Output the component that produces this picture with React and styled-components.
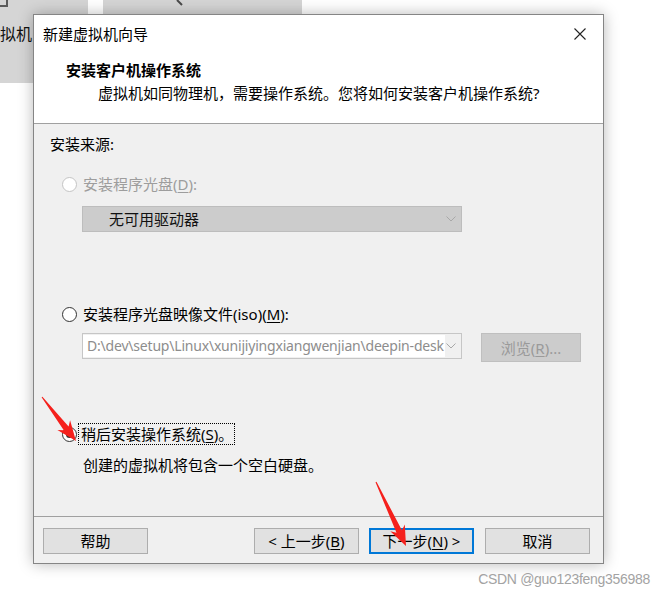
import React from "react";
import styled, { createGlobalStyle } from "styled-components";

const GlobalStyle = createGlobalStyle`
    html, body {
        margin: 0;
        padding: 0;
        background: #ffffff;
    }
    body {
        font-family: "Noto Sans", "Noto Sans CJK SC", sans-serif;
        color: #000000;
    }
`;

const Desktop = styled.div`
    position: relative;
    width: 664px;
    height: 593px;
    overflow: hidden;
    background: #ffffff;
`;

const TileRow = styled.div`
    display: flex;
    gap: 15px;
    align-items: flex-start;
`;

const Tile = styled.div`
    position: relative;
    width: ${({ w }) => w}px;
    height: ${({ h }) => h}px;
    background: #d5d5d5;
    overflow: hidden;
`;

const TileLabel = styled.div`
    margin: 24px 0 0 0;
    font-size: 16px;
    line-height: 20px;
    color: #111;
`;

const Dialog = styled.div`
    position: absolute;
    left: 33px;
    top: 14px;
    width: 569px;
    height: 548px;
    border: 1px solid #858585;
    background: #f0f0f0;
    box-shadow: 0 0 14px rgba(0, 0, 0, 0.28);
    display: flex;
    flex-direction: column;
    font-size: 15px;
`;

const TitleBar = styled.div`
    height: 37px;
    background: #ffffff;
    display: flex;
    align-items: center;
    justify-content: space-between;
    padding: 0 17px 0 9px;
    line-height: 20px;
`;

const Header = styled.div`
    height: 72px;
    background: #ffffff;
    padding: 8px 0 0 32px;
    box-sizing: border-box;
    border-bottom: 1px solid #a0a0a0;
    h1 {
        margin: 0;
        font-size: 15px;
        font-weight: bold;
        line-height: 20px;
    }
    p {
        margin: 3px 0 0 32px;
        line-height: 20px;
    }
`;

const Body = styled.div`
    flex: 1;
    padding: 0 16px;
    display: flex;
    flex-direction: column;
    align-items: flex-start;
    border-bottom: 1px solid #a0a0a0;
    line-height: 20px;
`;

const SourceLabel = styled.div`
    margin-top: 10px;
`;

const RadioRow = styled.label`
    display: flex;
    align-items: center;
    gap: 6px;
    margin-top: ${({ top }) => top}px;
    margin-left: 12px;
    color: ${({ disabled }) => (disabled ? "#9d9d9d" : "#000")};
`;

const RadioCircle = styled.span`
    width: 13px;
    height: 13px;
    border-radius: 50%;
    border: 1px solid ${({ disabled }) => (disabled ? "#c4c4c4" : "#333")};
    background: #ffffff;
    display: flex;
    align-items: center;
    justify-content: center;
    &::after {
        content: "";
        width: 7px;
        height: 7px;
        border-radius: 50%;
        background: ${({ checked }) => (checked ? "#333" : "transparent")};
    }
`;

const Focus = styled.span`
    outline: 1px dotted #000;
    outline-offset: 0;
    padding: 0 1px 0 2px;
    margin-left: -4px;
`;

const Key = styled.u`
    text-underline-offset: 2px;
`;

const Select = styled.div`
    margin-top: ${({ top }) => top}px;
    margin-left: 32px;
    width: 380px;
    height: 26px;
    box-sizing: border-box;
    border: 1px solid ${({ border }) => border};
    background: ${({ bg }) => bg};
    display: flex;
    align-items: center;
    justify-content: space-between;
    padding-right: 5px;
`;

const SelectText = styled.span`
    padding-left: ${({ indent }) => indent}px;
    color: ${({ muted }) => (muted ? "#8d8d8d" : "#111")};
    background: ${({ field }) => (field ? "#ffffff" : "transparent")};
    font-size: ${({ small }) => (small ? "14px" : "15px")};
    white-space: nowrap;
    overflow: hidden;
    width: ${({ w }) => (w ? `${w}px` : "auto")};
    line-height: 22px;
    letter-spacing: ${({ small }) => (small ? "-0.2px" : "0")};
`;

const PathRow = styled.div`
    display: flex;
    align-items: flex-start;
    gap: 19px;
`;

const BrowseButton = styled.div`
    margin-top: 9px;
    width: 98px;
    height: 27px;
    border: 1px solid #bfbfbf;
    background: #cccccc;
    color: #9a9a9a;
    display: flex;
    align-items: center;
    justify-content: center;
`;

const Hint = styled.div`
    margin-top: 11px;
    margin-left: 33px;
`;

const Footer = styled.div`
    height: 46px;
    display: flex;
    padding: 11px 13px 0 9px;
    box-sizing: border-box;
    gap: 10px;
`;

const Button = styled.div`
    width: ${({ primary }) => (primary ? "101px" : "103px")};
    height: ${({ primary }) => (primary ? "22px" : "24px")};
    border: ${({ primary }) =>
        primary ? "2px solid #0078d7" : "1px solid #adadad"};
    background: #e1e1e1;
    display: flex;
    align-items: center;
    justify-content: center;
    line-height: 20px;
    margin-left: ${({ push, spaced }) => (push ? "auto" : spaced ? "1px" : "0")};
`;

const Watermark = styled.div`
    position: absolute;
    right: 14px;
    bottom: 6px;
    font-family: "Liberation Sans", Arial, sans-serif;
    font-size: 14px;
    color: #a3a3a3;
    letter-spacing: -0.3px;
`;

const Overlay = styled.svg`
    position: absolute;
    left: 0;
    top: 0;
    pointer-events: none;
`;

const arrowPoints = (tx, ty, px, py) => {
    const dx = px - tx;
    const dy = py - ty;
    const len = Math.hypot(dx, dy);
    const ux = dx / len;
    const uy = dy / len;
    const nx = -uy;
    const ny = ux;
    const at = (s, w) => [tx + ux * s + nx * w, ty + uy * s + ny * w];
    const pts = [
        at(0, 0.5),
        at(len - 16, 3),
        at(len - 20, 8),
        at(len, 0),
        at(len - 20, -8),
        at(len - 16, -3),
        at(0, -0.5),
    ];
    return pts.map((p) => p.map((v) => v.toFixed(1)).join(",")).join(" ");
};

const Chevron = () => (
    <svg width="10" height="6" viewBox="0 0 10 6">
        <path d="M0.5 0.5 L5 5 L9.5 0.5" fill="none" stroke="#a8a8a8" strokeWidth="1" />
    </svg>
);

const App = () => {
    return (
        <Desktop>
            <GlobalStyle />
            <TileRow>
                <Tile w={88} h={83}>
                    <svg width="10" height="8" style={{ position: "absolute", left: 0, top: 0 }}>
                        <path d="M0 6 H7 V0" fill="none" stroke="#5a5a5a" strokeWidth="2" />
                    </svg>
                    <TileLabel>拟机</TileLabel>
                </Tile>
                <Tile w={199} h={60}>
                    <svg width="20" height="8" style={{ position: "absolute", left: 72, top: 0 }}>
                        <path d="M2 0 L7 5" fill="none" stroke="#4a4a4a" strokeWidth="2" />
                    </svg>
                </Tile>
            </TileRow>

            <Dialog>
                <TitleBar>
                    <span>新建虚拟机向导</span>
                    <svg width="12" height="12" viewBox="0 0 12 12">
                        <path d="M0.5 0.5 L11.5 11.5 M11.5 0.5 L0.5 11.5" stroke="#222" strokeWidth="1.1" />
                    </svg>
                </TitleBar>
                <Header>
                    <h1>安装客户机操作系统</h1>
                    <p>虚拟机如同物理机，需要操作系统。您将如何安装客户机操作系统?</p>
                </Header>
                <Body>
                    <SourceLabel>安装来源:</SourceLabel>

                    <RadioRow top={20} disabled>
                        <RadioCircle disabled />
                        <span>
                            安装程序光盘(<Key>D</Key>):
                        </span>
                    </RadioRow>
                    <Select top={12} border="#bdbdbd" bg="#cccccc">
                        <SelectText indent={26}>无可用驱动器</SelectText>
                        <Chevron />
                    </Select>

                    <RadioRow top={72}>
                        <RadioCircle />
                        <span>
                            安装程序光盘映像文件(iso)(<Key>M</Key>):
                        </span>
                    </RadioRow>
                    <PathRow>
                        <Select top={9} border="#c6c6c6" bg="#f0f0f0">
                            <SelectText indent={4} muted field small w={358}>
                                D:\dev\setup\Linux\xunijiyingxiangwenjian\deepin-desk
                            </SelectText>
                            <Chevron />
                        </Select>
                        <BrowseButton>
                            浏览(<Key>R</Key>)...
                        </BrowseButton>
                    </PathRow>

                    <RadioRow top={62}>
                        <RadioCircle checked />
                        <Focus>
                            稍后安装操作系统(<Key>S</Key>)。
                        </Focus>
                    </RadioRow>
                    <Hint>创建的虚拟机将包含一个空白硬盘。</Hint>
                </Body>
                <Footer>
                    <Button>帮助</Button>
                    <Button push>
                        &lt; 上一步(<Key>B</Key>)
                    </Button>
                    <Button primary>
                        下一步(<Key>N</Key>) &gt;
                    </Button>
                    <Button spaced>取消</Button>
                </Footer>
            </Dialog>

            <Overlay width="664" height="593">
                <polygon points={arrowPoints(42, 397, 76, 441)} fill="#f5201c" />
                <polygon points={arrowPoints(376, 482, 406, 546)} fill="#f5201c" />
            </Overlay>

            <Watermark>CSDN @guo123feng356988</Watermark>
        </Desktop>
    );
};

export default App;
